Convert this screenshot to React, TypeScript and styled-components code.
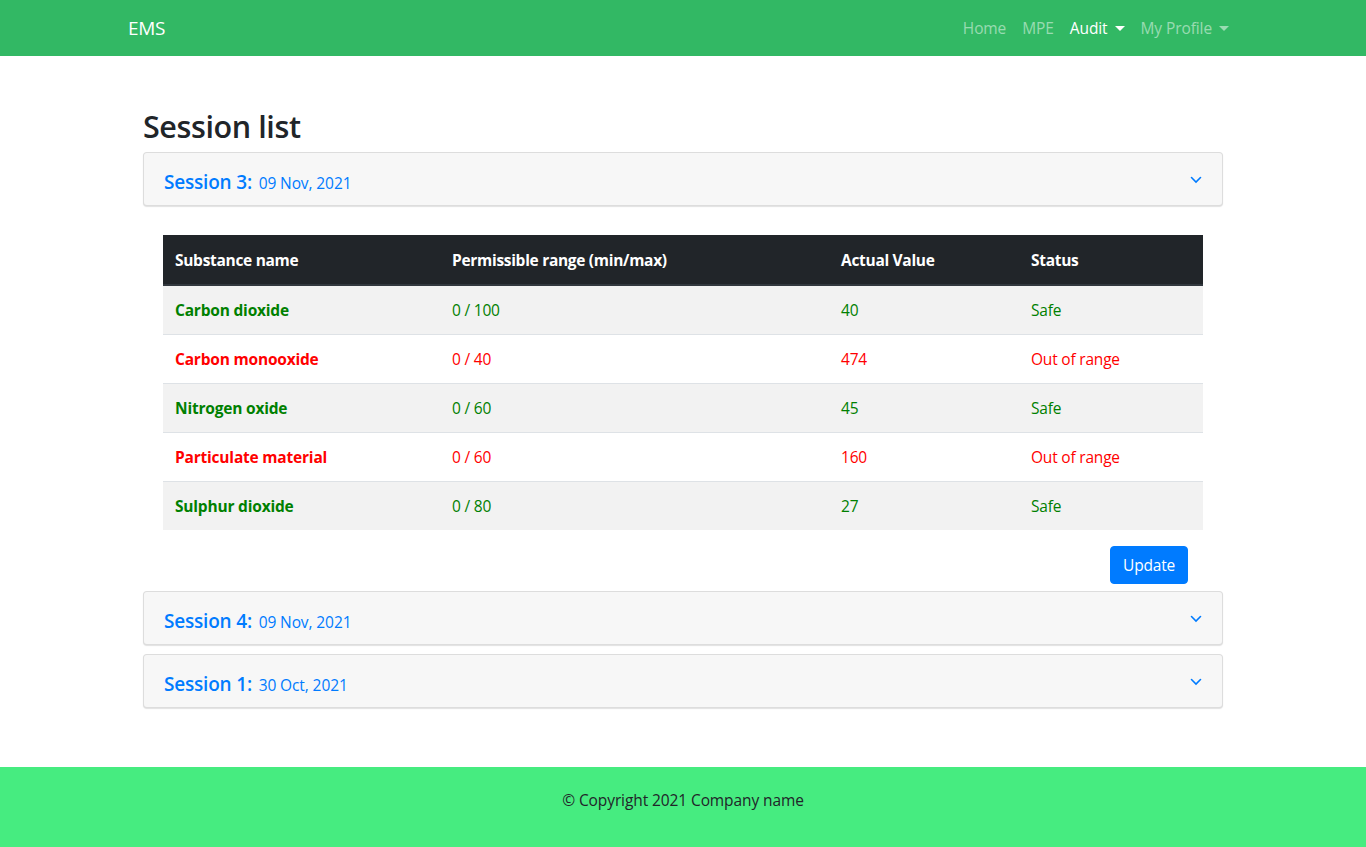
import styled, { createGlobalStyle } from "styled-components";

const GlobalStyle = createGlobalStyle`
  * { box-sizing: border-box; }
  body {
    margin: 0;
    font-family: "Open Sans", "Noto Sans", "Liberation Sans", sans-serif;
    font-size: 16px;
    color: #212529;
    background: #fff;
  }
`;

const Page = styled.div`
  min-height: 847px;
  display: flex;
  flex-direction: column;
`;

const NavBar = styled.nav`
  height: 56px;
  background: #32b864;
`;

const NavInner = styled.div`
  width: 1140px;
  margin: 0 auto;
  padding: 0 15px;
  height: 100%;
  display: flex;
  align-items: center;
  justify-content: space-between;
`;

const Brand = styled.a`
  color: #fff;
  font-size: 19px;
  letter-spacing: -0.3px;
`;

const NavLinks = styled.ul`
  display: flex;
  list-style: none;
  margin: 0 1px 0 0;
  padding: 0;
`;

const NavLink = styled.li<{ $active?: boolean; $drop?: boolean }>`
  padding: 8px 8px;
  font-size: 15.5px;
  letter-spacing: -0.1px;
  color: ${(p) => (p.$active ? "#fff" : "rgba(255,255,255,0.5)")};
  display: flex;
  align-items: center;
  &::after {
    content: ${(p) => (p.$drop ? "''" : "none")};
    display: inline-block;
    margin-left: 7px;
    border-top: 5px solid currentColor;
    border-left: 5px solid transparent;
    border-right: 5px solid transparent;
  }
`;

const Main = styled.main`
  width: 1080px;
  margin: 0 auto;
  padding-top: 52px;
  padding-bottom: 50px;
  flex: 1;
`;

const Title = styled.h2`
  margin: 0 0 8px;
  font-size: 30.5px;
  font-weight: 600;
  line-height: 36px;
  letter-spacing: -0.4px;
`;

const Item = styled.section<{ $gap?: number }>`
  margin-bottom: ${(p) => p.$gap ?? 9}px;
`;

const Header = styled.div`
  background: #f7f7f7;
  border: 1px solid rgba(0, 0, 0, 0.1);
  border-radius: 4px;
  box-shadow: 0 1px 1px rgba(0, 0, 0, 0.12);
  height: 54px;
  padding: 0 20px;
  display: flex;
  align-items: center;
  justify-content: space-between;
  color: #007bff;
`;

const HeaderTitle = styled.div`
  padding-top: 6px;
  font-size: 19px;
  font-weight: 600;
  letter-spacing: -0.2px;
  span {
    font-size: 15.5px;
    font-weight: 400;
    letter-spacing: -0.1px;
    margin-left: 2px;
  }
`;

const Chevron = () => (
  <svg width="12" height="8" viewBox="0 0 12 8" style={{ marginRight: 0, marginTop: 2 }}>
    <path d="M1.5 1.5 L6 6 L10.5 1.5" fill="none" stroke="#007bff" strokeWidth="1.6" strokeLinecap="round" />
  </svg>
);

const Body = styled.div`
  padding: 29px 20px 0;
`;

const Table = styled.table`
  width: 100%;
  border-collapse: collapse;
  font-size: 15.5px;
`;

const Th = styled.th<{ $w: number }>`
  width: ${(p) => p.$w}px;
  background: #212529;
  color: #fff;
  text-align: left;
  font-weight: 700;
  padding: 0 12px;
  height: 50px;
  border-bottom: 2px solid #32383e;
  letter-spacing: -0.3px;
`;

const Tr = styled.tr<{ $bad: boolean }>`
  color: ${(p) => (p.$bad ? "#ff0000" : "#008000")};
  &:nth-child(odd) {
    background: #f2f2f2;
  }
  &:not(:last-child) td {
    border-bottom: 1px solid #dee2e6;
  }
`;

const Td = styled.td<{ $bold?: boolean }>`
  height: 49px;
  padding: 0 12px;
  font-weight: ${(p) => (p.$bold ? 700 : 400)};
  letter-spacing: -0.2px;
`;

const Actions = styled.div`
  display: flex;
  justify-content: flex-end;
  padding: 16px 15px 0 0;
`;

const Button = styled.button`
  background: #007bff;
  border: 1px solid #007bff;
  color: #fff;
  border-radius: 4px;
  height: 38px;
  padding: 0 12px;
  font-family: inherit;
  font-size: 15.5px;
  letter-spacing: -0.2px;
`;

const Footer = styled.footer`
  height: 80px;
  background: #46ec80;
  display: flex;
  align-items: flex-start;
  justify-content: center;
  padding-top: 22px;
  font-size: 15.5px;
  line-height: 22px;
  letter-spacing: -0.1px;
  color: #212529;
`;

const rows = [
  { name: "Carbon dioxide", range: "0 / 100", value: "40", ok: true },
  { name: "Carbon monooxide", range: "0 / 40", value: "474", ok: false },
  { name: "Nitrogen oxide", range: "0 / 60", value: "45", ok: true },
  { name: "Particulate material", range: "0 / 60", value: "160", ok: false },
  { name: "Sulphur dioxide", range: "0 / 80", value: "27", ok: true },
];

function SessionHeader({ n, date }: { n: number; date: string }) {
  return (
    <Header>
      <HeaderTitle>
        Session {n}: <span>{date}</span>
      </HeaderTitle>
      <Chevron />
    </Header>
  );
}

export default function App() {
  return (
    <Page>
      <GlobalStyle />
      <NavBar>
        <NavInner>
          <Brand>EMS</Brand>
          <NavLinks>
            <NavLink>Home</NavLink>
            <NavLink>MPE</NavLink>
            <NavLink $active $drop>Audit</NavLink>
            <NavLink $drop>My Profile</NavLink>
          </NavLinks>
        </NavInner>
      </NavBar>
      <Main>
        <Title>Session list</Title>
        <Item $gap={7}>
          <SessionHeader n={3} date="09 Nov, 2021" />
          <Body>
            <Table>
              <thead>
                <tr>
                  <Th $w={277}>Substance name</Th>
                  <Th $w={389}>Permissible range (min/max)</Th>
                  <Th $w={190}>Actual Value</Th>
                  <Th $w={184}>Status</Th>
                </tr>
              </thead>
              <tbody>
                {rows.map((r) => (
                  <Tr key={r.name} $bad={!r.ok}>
                    <Td $bold>{r.name}</Td>
                    <Td>{r.range}</Td>
                    <Td>{r.value}</Td>
                    <Td>{r.ok ? "Safe" : "Out of range"}</Td>
                  </Tr>
                ))}
              </tbody>
            </Table>
            <Actions>
              <Button>Update</Button>
            </Actions>
          </Body>
        </Item>
        <Item>
          <SessionHeader n={4} date="09 Nov, 2021" />
        </Item>
        <Item>
          <SessionHeader n={1} date="30 Oct, 2021" />
        </Item>
      </Main>
      <Footer>© Copyright 2021 Company name</Footer>
    </Page>
  );
}
